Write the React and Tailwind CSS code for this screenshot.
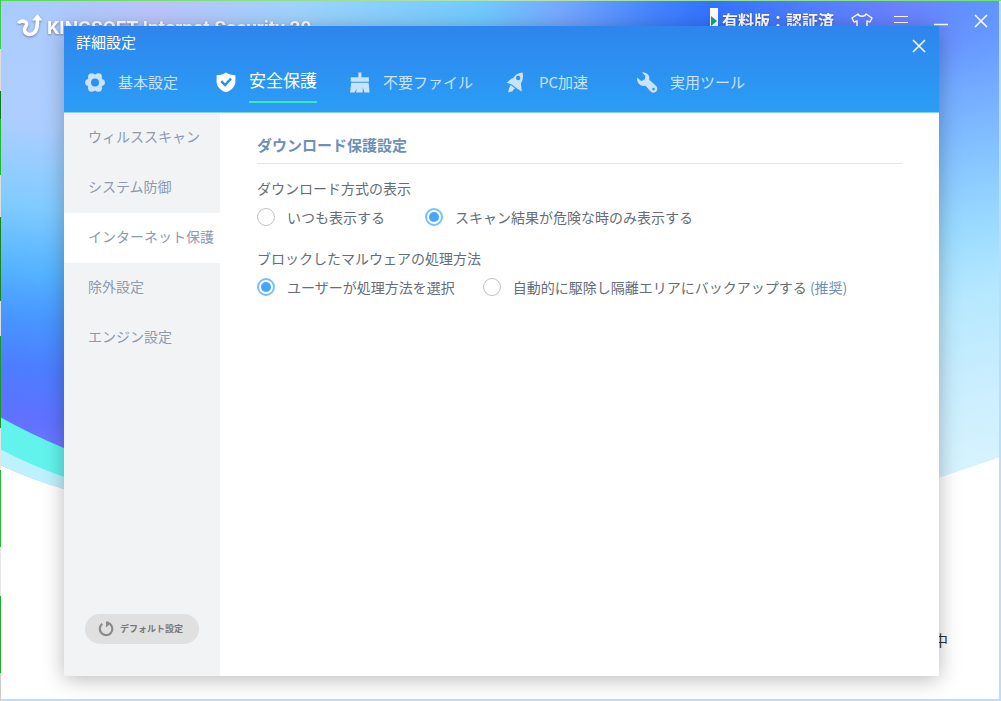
import React, { useState } from 'react';

const sideItems = ['ウィルススキャン', 'システム防御', 'インターネット保護', '除外設定', 'エンジン設定'];

function GearIcon() {
  return (
    <svg viewBox="0 0 22 22" className="w-[22px] h-[22px] shrink-0" fill="currentColor">
      <circle cx="11" cy="10.500" r="8" />
      <circle cx="17.600" cy="10.500" r="3.300" />
      <circle cx="14.300" cy="16.200" r="3.600" />
      <circle cx="7.700" cy="16.200" r="3.600" />
      <circle cx="4.400" cy="10.500" r="3.300" />
      <circle cx="7.700" cy="4.800" r="3.600" />
      <circle cx="14.300" cy="4.800" r="3.600" />
      <circle cx="11" cy="10.500" r="4" fill="#2d91f2" />
    </svg>
  );
}

function ShieldIcon() {
  return (
    <svg viewBox="0 0 22 22" className="w-[22px] h-[22px] shrink-0">
      <path d="M11 .6C8.800 2.300 5.500 3.200 1.600 3.300v6.400c0 4.800 3.600 8.300 9.400 10.600 5.800-2.300 9.400-5.800 9.400-10.600V3.300C16.500 3.200 13.200 2.300 11 .6z" fill="currentColor" />
      <path d="M6.300 9.200l3.700 3.800 6-6.400" fill="none" stroke="#2d8bef" strokeWidth="2.400" />
    </svg>
  );
}

function BrushIcon() {
  return (
    <svg viewBox="0 0 22 22" className="w-[22px] h-[22px] shrink-0" fill="currentColor">
      <path d="M9.400.5h3v4.700h7.500v4.600H1.700V5.200h7.700z" />
      <path d="M2.200 10.800h17.400l1 9.700h-5.200l-1.700-5.500v5.500H7l.8-4-2.200 4H1z" />
    </svg>
  );
}

function RocketIcon() {
  return (
    <svg viewBox="0 0 22 22" className="w-[22px] h-[22px] shrink-0" fill="currentColor">
      <path
        fillRule="evenodd"
        d="M17.600.4c.9 4.600.3 8.200-1.700 10.800l.9 8.300-5.300-3.200-4.700-3.900-5.300-1.600 5.200-4.300 1.500-.5C10.400 2.500 13.500.6 17.600.4zM13.200 3.800a2.200 2.200 0 1 0 0 4.400 2.200 2.200 0 0 0 0-4.400z"
      />
      <path d="M5.800 13l4.400 3.700-1.800.9-.9 1.700-4.300 1.200.8-4.300z" />
    </svg>
  );
}

function WrenchIcon() {
  return (
    <svg viewBox="0 0 22 22" className="w-[22px] h-[22px] shrink-0" fill="currentColor">
      <path
        fillRule="evenodd"
        d="M6 .6c4.600-.8 8.200 2.800 7.200 7.200l7 6.300c3.300 3.700-1.400 8.600-5.200 5.700l-5.600-6C4.500 14.800.4 11 1.200 5.400l4 3.500 3.400-1.300.9-3.500zM17.500 15.800a1.300 1.300 0 1 0 0 2.600 1.300 1.300 0 0 0 0-2.600z"
      />
    </svg>
  );
}

const tabs = [
  { name: '基本設定', Icon: GearIcon },
  { name: '安全保護', Icon: ShieldIcon },
  { name: '不要ファイル', Icon: BrushIcon },
  { name: 'PC加速', Icon: RocketIcon },
  { name: '実用ツール', Icon: WrenchIcon },
];

function CloseIcon() {
  return (
    <svg viewBox="0 0 14 14" className="w-3.5 h-3.5" stroke="currentColor" strokeWidth="1.500">
      <path d="M1 1l12 12M13 1L1 13" />
    </svg>
  );
}

// blue and purple sky with the white wave at the bottom
function Backdrop() {
  return (
    <svg viewBox="0 0 1001 701" preserveAspectRatio="none" className="absolute inset-0 w-full h-full" aria-hidden="true">
      <defs>
        <linearGradient id="top" gradientUnits="userSpaceOnUse" x1="0" y1="0" x2="1001" y2="0">
          <stop offset="0" stopColor="#a6ccff" />
          <stop offset="0.16" stopColor="#bac4fa" />
          <stop offset="0.3" stopColor="#9dd3fd" />
          <stop offset="0.48" stopColor="#70caff" />
          <stop offset="0.56" stopColor="#76a8ff" />
          <stop offset="0.65" stopColor="#4585ff" />
          <stop offset="0.71" stopColor="#3272ff" />
          <stop offset="0.8" stopColor="#4d7dff" />
          <stop offset="0.9" stopColor="#6b82ff" />
          <stop offset="1" stopColor="#5c99ff" />
        </linearGradient>
        <linearGradient id="left" gradientUnits="userSpaceOnUse" x1="60" y1="0" x2="0" y2="450">
          <stop offset="0" stopColor="#aecdff" stopOpacity="0" />
          <stop offset="0.14" stopColor="#aecdff" />
          <stop offset="0.28" stopColor="#acceff" />
          <stop offset="0.46" stopColor="#80cbff" />
          <stop offset="0.6" stopColor="#55b3ff" />
          <stop offset="0.7" stopColor="#4897ff" />
          <stop offset="0.81" stopColor="#4c7eff" />
          <stop offset="0.92" stopColor="#5f71ff" />
          <stop offset="1" stopColor="#6f78ff" />
        </linearGradient>
        <linearGradient id="right" gradientUnits="userSpaceOnUse" x1="900" y1="20" x2="1000" y2="480">
          <stop offset="0" stopColor="#6b8fff" stopOpacity="0" />
          <stop offset="0.14" stopColor="#6fa5ff" />
          <stop offset="0.3" stopColor="#83c1ff" />
          <stop offset="0.46" stopColor="#9adaff" />
          <stop offset="0.6" stopColor="#b5e8ff" />
          <stop offset="0.8" stopColor="#cbeefe" />
          <stop offset="1" stopColor="#d9f4fe" />
        </linearGradient>
      </defs>
      <rect width="1001" height="701" fill="#fff" />
      <rect width="1001" height="140" fill="url(#top)" />
      <path d="M0 0H64V500L0 465z" fill="url(#left)" />
      <path d="M500 0H1001V457L939 478 500 620z" fill="url(#right)" />
      <path d="M0 417Q30 434 64 448L200 500V560L64 489Q30 479 0 465z" fill="#62f3ed" />
      <path d="M0 449Q30 465 64 477L200 530V560L64 489Q30 479 0 465z" fill="#bdf1fd" />
      <path d="M0 465Q30 479 64 489L500 620 939 478 1001 457V701H0z" fill="#fff" />
    </svg>
  );
}

function Radio({ name, value, current, onChange, children }) {
  return (
    <label className="flex items-center gap-3 cursor-pointer">
      <input
        type="radio"
        name={name}
        checked={current === value}
        onChange={() => onChange(value)}
        className="appearance-none w-[18px] h-[18px] shrink-0 rounded-full border border-[#bfc2c5] bg-white checked:border-2 checked:border-[#78bfff] checked:p-0.5 checked:bg-[#45a6ff] checked:bg-clip-content"
      />
      <span>{children}</span>
    </label>
  );
}

function App() {
  const [tab, setTab] = useState('安全保護');
  const [side, setSide] = useState('インターネット保護');
  const [display, setDisplay] = useState('danger');
  const [action, setAction] = useState('user');

  return (
    <div className="relative flex flex-col min-h-screen overflow-hidden font-['Noto_Sans_CJK_JP',sans-serif]">
      <Backdrop />
      {/* window edges, the desktop shows through on the left and top */}
      <div className="absolute inset-0 mt-px ml-px border-r-2 border-b-2 border-[#b9defb]"></div>
      <div className="absolute inset-x-0 top-0 h-px bg-linear-to-r from-[#56d84e] via-[#b5e2b4] to-[#74e070]"></div>
      <div className="absolute inset-y-0 left-0 w-px bg-[linear-gradient(#3ccc46_0_7%,#ddd_7%_13%,#0d7a1c_13%_17%,#21b82b_17%_25%,#ddd_25%_31%,#17851a_31%_43%,#ddd_43%_48%,#1f9426_48%_61%,#e4e4e4_61%_67%,#2bb53a_67%_78%,#e4e4e4_78%_85%,#1fae2c_85%_96%,#ccc_96%)]"></div>

      {/* Main window */}
      <header className="relative flex items-start justify-between pl-[17px] pr-[13px] text-white">
        <div className="flex items-start gap-1 pt-3.5">
          <svg viewBox="0 0 26 24" className="w-[26px] h-6 drop-shadow-[0_1px_1px_#6e7fa0]" fill="none" stroke="#fff">
            <path d="M1.500 9.500C2.500 6.500 6 6.800 8.500 8c3 1.800 0 4-.8 6.500-1 4.500 3.800 7.500 8.300 5 4-2.200 4.500-6.500 4.500-13.500" strokeWidth="3.600" />
            <path d="M15 6.500 20.500 0 25.500 6.500z" fill="#fff" stroke="none" />
          </svg>
          <h1 className="font-['Roboto',sans-serif] font-bold text-[19px] leading-7 drop-shadow-[0_1px_1px_#6e7fa0] whitespace-nowrap">
            KINGSOFT Internet Security 20
          </h1>
        </div>
        <div className="flex items-start gap-4 pt-2">
          <div className="flex items-start gap-1">
            <svg viewBox="0 0 8 20" className="w-2 h-5">
              <path d="M0 0h8v20H0z" fill="#fff" />
              <path d="M1 8l6 5-6 5z" fill="#12a87d" />
            </svg>
            <span className="font-bold text-base leading-6 drop-shadow-[0_1px_1px_#3a55b0] whitespace-nowrap">有料版：認証済</span>
          </div>
          <button aria-label="スキン" className="pt-1">
            <svg viewBox="0 0 24 20" className="w-6 h-5" fill="none" stroke="currentColor" strokeWidth="1.500">
              <path d="M8 2C9 5 15 5 16 2l6 4-2 4-3-1v9H7V9l-3 1-2-4z" strokeLinejoin="round" />
            </svg>
          </button>
          <button aria-label="メニュー" className="pt-1.5 pl-1">
            <svg viewBox="0 0 14 16" className="w-3.5 h-4" stroke="currentColor">
              <path d="M0 2.500h14M0 8.500h14M0 14.500h14" />
            </svg>
          </button>
          <button aria-label="最小化" className="pt-2 pl-2.5">
            <svg viewBox="0 0 14 12" className="w-3.5 h-3" stroke="currentColor">
              <path d="M0 8.500h14" strokeWidth="1.500" />
            </svg>
          </button>
          <button aria-label="閉じる" className="pt-1.5 pl-2.5">
            <CloseIcon />
          </button>
        </div>
      </header>
      <footer className="relative mt-auto pb-[51px] pr-[53px] text-right text-[15px] leading-5 text-[#333]">中</footer>

      {/* Settings dialog */}
      <div className="absolute inset-0 flex pt-[26px] pb-[25px] pl-16 pr-[62px]">
        <section className="flex flex-col flex-1 bg-white shadow-[0_3px_20px_rgba(0,0,0,0.28)]">
          <div className="bg-linear-to-b from-[#2e85ed] to-[#2b9df6] border-b border-[#8accfb] text-white">
            <div className="flex items-start justify-between pl-3 pr-[13px] h-[38px]">
              <h2 className="pt-1 text-[15px] leading-6">詳細設定</h2>
              <button aria-label="設定を閉じる" className="pt-[13px]">
                <CloseIcon />
              </button>
            </div>
            <nav className="flex items-start gap-8 h-12 pl-5">
              {tabs.map(({ name, Icon }) => (
                <button
                  key={name}
                  onClick={() => setTab(name)}
                  className={`flex items-start gap-3 min-w-[99px] whitespace-nowrap ${
                    tab === name ? 'text-white' : 'text-[#c9e3fc]'
                  }`}
                >
                  <span className="pt-2">
                    <Icon />
                  </span>
                  <span
                    className={
                      tab === name
                        ? 'border-b-2 border-[#3ce8b4] pt-0.5 pb-[7px] text-[17px] leading-7'
                        : 'pt-1.5 text-[15px] leading-6'
                    }
                  >
                    {name}
                  </span>
                </button>
              ))}
            </nav>
          </div>

          <div className="flex flex-1">
            <aside className="flex flex-col w-[156px] shrink-0 bg-[#f2f3f5]">
              {sideItems.map((item) => (
                <button
                  key={item}
                  onClick={() => setSide(item)}
                  className={`h-[50px] pl-6 pb-1 text-left text-sm text-[#8d9ab0] whitespace-nowrap ${
                    side === item ? 'bg-white' : ''
                  }`}
                >
                  {item}
                </button>
              ))}
              <button className="flex items-center gap-1.5 h-[30px] mt-auto mb-8 mx-[21px] pl-[13px] rounded-full bg-[#e0e0e0] text-[9px] font-bold text-[#777] whitespace-nowrap">
                <svg viewBox="0 0 16 16" className="w-4 h-4" fill="none" stroke="#8a8a8a" strokeWidth="2.200">
                  <path d="M4.200 2.800A6.300 6.300 0 1 0 12 2.900" />
                  <path d="M8 .5v6l5-4.200L10 .5z" fill="#8a8a8a" stroke="none" />
                </svg>
                デフォルト設定
              </button>
            </aside>

            <main className="flex-1 px-[37px] pt-5 text-sm leading-6 text-[#666d75]">
              <h3 className="pb-1.5 border-b border-[#e3e4e5] text-[15px] font-bold text-[#6c91b9]">ダウンロード保護設定</h3>
              <fieldset className="pt-3">
                <legend className="float-left w-full">ダウンロード方式の表示</legend>
                <div className="clear-both flex gap-10 pt-[5px]">
                  <Radio name="display" value="always" current={display} onChange={setDisplay}>
                    いつも表示する
                  </Radio>
                  <Radio name="display" value="danger" current={display} onChange={setDisplay}>
                    スキャン結果が危険な時のみ表示する
                  </Radio>
                </div>
              </fieldset>
              <fieldset className="pt-[17px]">
                <legend className="float-left w-full">ブロックしたマルウェアの処理方法</legend>
                <div className="clear-both flex gap-7 pt-[5px]">
                  <Radio name="action" value="user" current={action} onChange={setAction}>
                    ユーザーが処理方法を選択
                  </Radio>
                  <Radio name="action" value="auto" current={action} onChange={setAction}>
                    自動的に駆除し隔離エリアにバックアップする <span className="text-[#6c91b9]">(推奨)</span>
                  </Radio>
                </div>
              </fieldset>
            </main>
          </div>
        </section>
      </div>
    </div>
  );
}

export default App;
